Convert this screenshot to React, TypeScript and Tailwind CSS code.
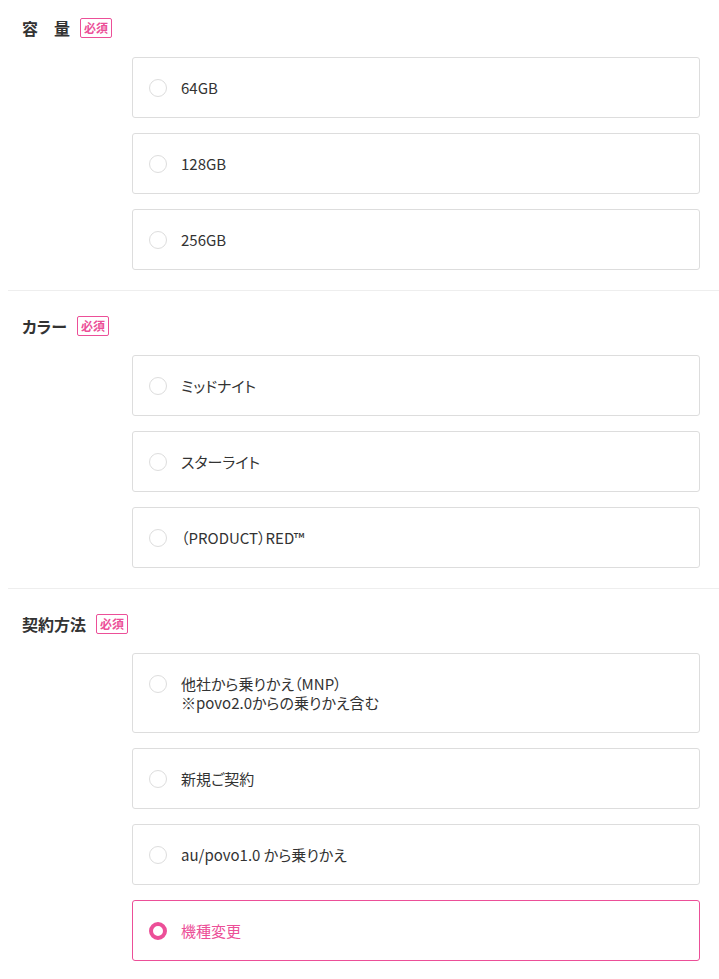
import React, { useState } from 'react';

interface Section {
  key: string;
  title: string;
  options: string[][];
}

const sections: Section[] = [
  { key: 'capacity', title: '容　量', options: [['64GB'], ['128GB'], ['256GB']] },
  { key: 'color', title: 'カラー', options: [['ミッドナイト'], ['スターライト'], ['（PRODUCT）RED™']] },
  {
    key: 'contract',
    title: '契約方法',
    options: [
      ['他社から乗りかえ（MNP）', '※povo2.0からの乗りかえ含む'],
      ['新規ご契約'],
      ['au/povo1.0 から乗りかえ'],
      ['機種変更'],
    ],
  },
];

function Radio({ checked }: { checked: boolean }) {
  return (
    <span
      className={`mt-px h-[18px] w-[18px] shrink-0 rounded-full bg-white ${
        checked ? 'border-[4px] border-[#ec4f98]' : 'border border-[#dddddd]'
      }`}
    />
  );
}

export default function App() {
  const [selected, setSelected] = useState<Record<string, string>>({ contract: '機種変更' });

  return (
    <div
      className="min-h-screen bg-white pl-2 text-[#333333] [font-feature-settings:'palt']"
      style={{ fontFamily: '"Noto Sans CJK JP", "Noto Sans", sans-serif' }}
    >
      {sections.map((section, i) => (
        <section
          key={section.key}
          className={`pb-5 ${i === 0 ? 'pt-[18px]' : 'pt-[25px]'} ${
            i < sections.length - 1 ? 'border-b border-[#eeeeee]' : ''
          }`}
        >
          <div className="flex items-center gap-[10px] pl-[14px]">
            <h2 className="text-[16px] font-bold leading-5 whitespace-pre">{section.title}</h2>
            <span className="flex h-5 items-center rounded-[2px] border border-[#ec4f98] px-[3px] text-[12px] font-bold leading-none text-[#ec4f98]">
              必須
            </span>
          </div>
          <div className="mr-[19px] ml-[124px] mt-[19px] flex flex-col gap-[15px]">
            {section.options.map((lines) => {
              const checked = selected[section.key] === lines[0];
              return (
                <button
                  key={lines[0]}
                  type="button"
                  onClick={() => setSelected({ ...selected, [section.key]: lines[0] })}
                  className={`flex items-start gap-[14px] rounded-[3px] border bg-white py-[20px] pl-4 text-left ${
                    checked ? 'border-[#ec4f98] text-[#ec4f98]' : 'border-[#dddddd]'
                  }`}
                >
                  <Radio checked={checked} />
                  <span className="text-[15px] leading-[19px]">
                    {lines.map((l) => (
                      <span key={l} className="block">
                        {l}
                      </span>
                    ))}
                  </span>
                </button>
              );
            })}
          </div>
        </section>
      ))}
    </div>
  );
}
